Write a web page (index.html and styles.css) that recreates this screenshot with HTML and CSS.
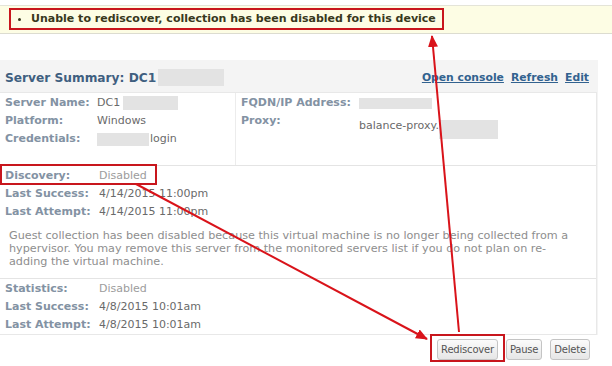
FILE: index.html
```html
<!DOCTYPE html>
<html lang="en">
<head>
  <meta charset="UTF-8">
  <title>Server Summary</title>
  <link rel="stylesheet" href="styles.css">
</head>
<body>
  <div class="notice">
    <ul class="notice-box">
      <li>Unable to rediscover, collection has been disabled for this device</li>
    </ul>
  </div>

  <div class="panel">
    <div class="panel-head">
      <h2>Server Summary: DC1<span class="hide hide-title"></span></h2>
      <div class="links">
        <a href="#">Open console</a>
        <a href="#">Refresh</a>
        <a href="#">Edit</a>
      </div>
    </div>

    <div class="panel-body">
      <div class="section info">
        <div class="info-col left">
          <span class="label">Server Name:</span><span class="value">DC1<span class="hide hide-name"></span></span>
          <span class="label">Platform:</span><span class="value">Windows</span>
          <span class="label">Credentials:</span><span class="value"><span class="hide hide-cred"></span>login</span>
        </div>
        <div class="info-col right">
          <span class="label">FQDN/IP Address:</span><span class="value"><span class="hide hide-fqdn"></span></span>
          <span class="label">Proxy:</span><span class="value">balance-proxy.<span class="hide hide-proxy"></span></span>
        </div>
      </div>

      <div class="section">
        <div class="pairs">
          <span class="label">Discovery:</span><span class="value dim">Disabled</span>
          <span class="label">Last Success:</span><span class="value">4/14/2015 11:00pm</span>
          <span class="label">Last Attempt:</span><span class="value">4/14/2015 11:00pm</span>
        </div>
        <p class="note">Guest collection has been disabled because this virtual machine is no longer being collected from a hypervisor. You may remove this server from the monitored servers list if you do not plan on re-adding the virtual machine.</p>
      </div>

      <div class="section last">
        <div class="pairs">
          <span class="label">Statistics:</span><span class="value dim">Disabled</span>
          <span class="label">Last Success:</span><span class="value">4/8/2015 10:01am</span>
          <span class="label">Last Attempt:</span><span class="value">4/8/2015 10:01am</span>
        </div>
      </div>
    </div>

    <div class="actions">
      <button class="btn">Rediscover</button>
      <button class="btn">Pause</button>
      <button class="btn">Delete</button>
    </div>
  </div>

  <!-- annotations drawn over the page -->
  <div class="mark mark-discovery"></div>
  <div class="mark mark-rediscover"></div>
  <svg class="arrows" width="612" height="366" viewBox="0 0 612 366">
    <defs>
      <marker id="head" markerWidth="12" markerHeight="10" refX="11" refY="5" orient="auto" markerUnits="userSpaceOnUse">
        <path d="M0,0 L12,5 L0,10 Z" fill="#d9131a"/>
      </marker>
    </defs>
    <line x1="136" y1="184" x2="427" y2="339" stroke="#d9131a" stroke-width="2" marker-end="url(#head)"/>
    <line x1="459" y1="332" x2="432" y2="36" stroke="#d9131a" stroke-width="2" marker-end="url(#head)"/>
  </svg>
</body>
</html>
```

FILE: styles.css
```css
body {
  margin: 0;
  font-family: "DejaVu Sans", Verdana, sans-serif;
  font-size: 11px;
  color: #555;
  background: #fff;
  position: relative;
  width: 612px;
  height: 366px;
  overflow: hidden;
}

.notice {
  margin-top: 5px;
  height: 29px;
  background: #fdfde4;
  border-top: 1px solid #e4e4d8;
  border-bottom: 1px solid #dcdcd0;
  padding: 2px 0 0 9px;
  box-sizing: border-box;
}

.notice-box {
  display: inline-block;
  margin: 0;
  padding: 2px 6px 3px 20px;
  border: 2px solid #c8161d;
  font-weight: bold;
  font-size: 11px;
  color: #38381c;
}

.panel {
  margin-top: 26px;
  width: 598px;
  background: #f4f4f4;
}

.panel-head {
  display: flex;
  justify-content: space-between;
  align-items: flex-end;
  height: 32px;
  padding: 0 9px 0 5px;
}

.panel-head h2 {
  margin: 0 0 6px;
  font-size: 12.2px;
  color: #3f5f80;
  display: flex;
  align-items: center;
}

.links {
  display: flex;
  gap: 7px;
  margin-bottom: 8px;
}

.links a {
  color: #32628f;
  font-weight: bold;
  font-size: 10.8px;
}

.panel-body {
  background: #fff;
  border: 1px solid #e8e8e8;
  border-left: none;
  margin-right: 1px;
}

.section {
  border-bottom: 1px solid #e4e4e4;
  padding: 0 5px;
}

.section.last {
  border-bottom: none;
}

.info {
  display: flex;
  padding: 0;
  height: 72px;
}

.info-col {
  display: grid;
  align-content: start;
  line-height: 18px;
  padding-top: 1px;
}

.info-col.left {
  width: 230px;
  padding-left: 5px;
  grid-template-columns: 92px 1fr;
  border-right: 1px solid #ececec;
}

.info-col.right {
  padding-left: 5px;
  grid-template-columns: 118px 1fr;
}

.pairs {
  display: grid;
  grid-template-columns: 94px 1fr;
  line-height: 18px;
  padding-top: 1px;
}

.label {
  font-weight: bold;
  color: #8392a3;
}

.value {
  display: flex;
  align-items: center;
  color: #6a6a6a;
}

.value.dim {
  color: #9c9c9c;
}

.hide {
  display: inline-block;
  background: #e3e3e3;
}

.hide-title { width: 66px; height: 17px; margin-left: 2px; }
.hide-name { width: 55px; height: 14px; margin-left: 3px; }
.hide-cred { width: 52px; height: 13px; margin-right: 1px; }
.hide-fqdn { width: 73px; height: 11px; }
.hide-proxy { width: 59px; height: 19px; margin-top: 8px; }

.note {
  margin: 8px 0 0;
  padding: 0 14px 10px 4px;
  font-size: 11.2px;
  line-height: 13px;
  color: #8e8e8e;
}

.actions {
  display: flex;
  justify-content: flex-end;
  gap: 8px;
  background: #fff;
  padding: 4px 8px 0 0;
}

.btn {
  font-family: "DejaVu Sans", Tahoma, sans-serif;
  font-size: 10px;
  letter-spacing: -0.2px;
  color: #555;
  height: 21px;
  padding: 0 3px;
  border: 1px solid #c4c4c4;
  border-radius: 3px;
  background: linear-gradient(#fbfbfb, #e6e6e6);
}

.mark {
  position: absolute;
  border: 2px solid #c8161d;
  box-sizing: border-box;
}

.mark-discovery {
  left: 0;
  top: 164px;
  width: 157px;
  height: 21px;
}

.mark-rediscover {
  left: 430px;
  top: 334px;
  width: 75px;
  height: 28px;
}

.arrows {
  position: absolute;
  left: 0;
  top: 0;
}
```
